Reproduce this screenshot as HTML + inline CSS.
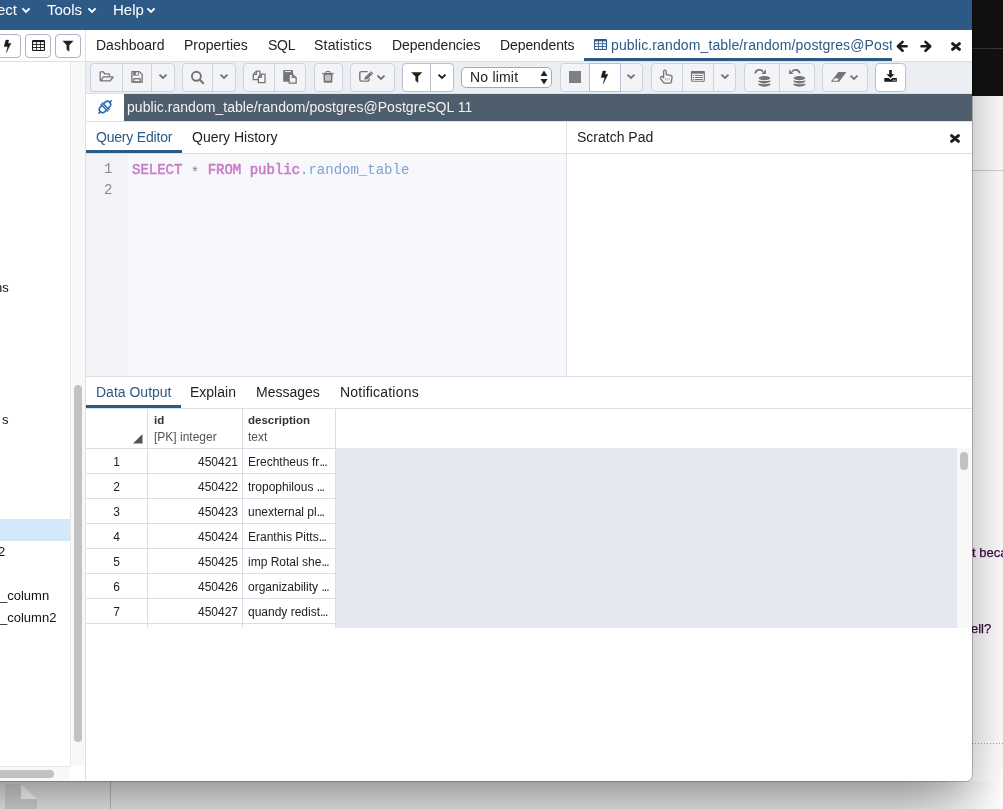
<!DOCTYPE html>
<html><head><meta charset="utf-8">
<style>
*{box-sizing:border-box;margin:0;padding:0}
html,body{width:1003px;height:809px;overflow:hidden;background:#fff;font-family:"Liberation Sans",sans-serif;color:#222}
.a{position:absolute}
.t{position:absolute;white-space:nowrap;line-height:1;will-change:transform}
.mono{font-family:"Liberation Mono",monospace}
</style></head>
<body>
<div class="a" style="left:0px;top:0px;width:1003px;height:809px;background:#fff"></div>
<div class="a" style="left:972px;top:0px;width:31px;height:96px;background:#121212"></div>
<div class="a" style="left:972px;top:48px;width:31px;height:1px;background:#3a3a3a"></div>
<div class="a" style="left:972px;top:170px;width:31px;height:1px;background:#d0d0d0"></div>
<div class="t" style="left:972px;top:546px;font-size:13px;color:#3e0843;-webkit-text-stroke:0.25px #3e0843">t beca</div>
<div class="t" style="left:971px;top:622px;font-size:13px;color:#3e0843;-webkit-text-stroke:0.25px #3e0843">ell?</div>
<div class="a" style="left:972px;top:743px;width:31px;height:1px;background:repeating-linear-gradient(90deg,#a8a8a8 0 1px,transparent 1px 3px)"></div>
<div class="a" style="left:0px;top:781px;width:1003px;height:28px;background:linear-gradient(180deg,#dcdcdc 0,#e2e2e2 10px,#e8e8e8 28px)"></div>
<div class="a" style="left:900px;top:781px;width:103px;height:28px;background:linear-gradient(90deg,rgba(255,255,255,0) 0,rgba(255,255,255,0.6) 60px,rgba(255,255,255,1) 100px)"></div>
<div class="a" style="left:110px;top:781px;width:1px;height:28px;background:rgba(0,0,0,0.2)"></div>
<svg class="a" style="left:5px;top:784px" width="33" height="25" viewBox="0 0 33 25"><path d="M0 0 H16 L32 15 V25 H0 Z" fill="#d0d0d0"/><path d="M16 0 L32 15 H16 Z" fill="#fafafa"/></svg>
<div class="a" style="left:-300px;top:-100px;width:1272px;height:881px;background:#fff;border-bottom-right-radius:6px;box-shadow:0 18px 50px rgba(0,0,0,0.35)"></div>
<div class="a" style="left:0;top:0;width:972px;height:781px;background:#fff;border-bottom-right-radius:6px;overflow:hidden;box-shadow:0 0 0 1px rgba(0,0,0,0.22)">
<div class="a" style="left:0px;top:0px;width:972px;height:30px;background:#2c5985"></div>
<div class="t" style="left:-3px;top:1.5px;font-size:15px;color:#fff">ect</div>
<div class="t" style="left:47px;top:1.5px;font-size:15px;color:#fff">Tools</div>
<div class="t" style="left:112.5px;top:1.5px;font-size:15px;color:#fff">Help</div>
<svg class="a" style="left:21px;top:6px" width="10" height="9" viewBox="0 0 10 9"><path d="M1.4 2.4 L5 5.9 L8.6 2.4" fill="none" stroke="#fff" stroke-width="2"/></svg>
<svg class="a" style="left:86.8px;top:6px" width="10" height="9" viewBox="0 0 10 9"><path d="M1.4 2.4 L5 5.9 L8.6 2.4" fill="none" stroke="#fff" stroke-width="2"/></svg>
<svg class="a" style="left:146px;top:6px" width="10" height="9" viewBox="0 0 10 9"><path d="M1.4 2.4 L5 5.9 L8.6 2.4" fill="none" stroke="#fff" stroke-width="2"/></svg>
<div class="a" style="left:-10px;top:34px;width:31px;height:24px;border:1px solid #aab4c5;border-radius:4px;background:#fff"></div>
<div class="a" style="left:25px;top:34px;width:26px;height:24px;border:1px solid #aab4c5;border-radius:4px;background:#fff"></div>
<div class="a" style="left:55px;top:34px;width:26px;height:24px;border:1px solid #aab4c5;border-radius:4px;background:#fff"></div>
<svg class="a" style="left:-1px;top:37px" width="18" height="18" viewBox="0 0 18 18"><path d="M6.9 3.1 L9.8 3.1 L8.9 6.4 L12.0 6.2 L7.3 15.6 L8.8 9.5 L5.1 9.6 Z" fill="#1a1a1a" stroke="#1a1a1a" stroke-width="0.4" stroke-linejoin="round"/></svg>
<svg class="a" style="left:32px;top:40px" width="13" height="11" viewBox="0 0 13 11"><rect x="0" y="0" width="13" height="11" rx="1.2" fill="#1a1a1a"/><g fill="#fff"><rect x="1.1" y="2.1" width="3.1" height="2"/><rect x="5" y="2.1" width="3.1" height="2"/><rect x="8.9" y="2.1" width="3" height="2"/><rect x="1.1" y="5" width="3.1" height="2"/><rect x="5" y="5" width="3.1" height="2"/><rect x="8.9" y="5" width="3" height="2"/><rect x="1.1" y="7.9" width="3.1" height="2"/><rect x="5" y="7.9" width="3.1" height="2"/><rect x="8.9" y="7.9" width="3" height="2"/></g></svg>
<svg class="a" style="left:62px;top:40px" width="12" height="12" viewBox="0 0 12 12"><path d="M0.5 0.8 H11.5 L7.3 5.2 V11.8 L4.6 9.4 V5.2 Z" fill="#222"/></svg>
<div class="a" style="left:0px;top:61px;width:85px;height:1px;background:#dde0e6"></div>
<div class="a" style="left:70px;top:62px;width:15px;height:704px;background:#f8f8f8;border-left:1px solid #e8e8e8"></div>
<div class="a" style="left:74px;top:385px;width:8px;height:357px;background:#c2c2c2;border-radius:4px"></div>
<div class="a" style="left:0px;top:766px;width:70px;height:15px;background:#f8f8f8;border-top:1px solid #e8e8e8"></div>
<div class="a" style="left:-10px;top:770px;width:64px;height:8px;background:#c2c2c2;border-radius:4px"></div>
<div class="a" style="left:70px;top:766px;width:15px;height:15px;background:#fff"></div>
<div class="a" style="left:0px;top:519px;width:70px;height:22px;background:#d3e9fb"></div>
<div class="t" style="left:-4.8px;top:281px;font-size:13px;color:#111">ns</div>
<div class="t" style="left:2.1px;top:413px;font-size:13px;color:#111">s</div>
<div class="t" style="left:-2px;top:545px;font-size:13px;color:#111">2</div>
<div class="t" style="left:0px;top:589px;font-size:13px;color:#111">_column</div>
<div class="t" style="left:0px;top:611px;font-size:13px;color:#111">_column2</div>
<div class="a" style="left:85px;top:30px;width:1px;height:751px;background:#dde0e6"></div>
<div class="t" style="left:96px;top:38px;font-size:14px;color:#222;letter-spacing:0px">Dashboard</div>
<div class="t" style="left:184px;top:38px;font-size:14px;color:#222;letter-spacing:0px">Properties</div>
<div class="t" style="left:268px;top:38px;font-size:14px;color:#222;letter-spacing:-0.3px">SQL</div>
<div class="t" style="left:314px;top:38px;font-size:14px;color:#222;letter-spacing:0.2px">Statistics</div>
<div class="t" style="left:392px;top:38px;font-size:14px;color:#222;letter-spacing:-0.1px">Dependencies</div>
<div class="t" style="left:500px;top:38px;font-size:14px;color:#222;letter-spacing:-0.1px">Dependents</div>
<div class="t" style="left:611px;top:38px;font-size:14px;color:#2c5985;width:281px;height:17px;line-height:14px;overflow:hidden;letter-spacing:0.12px">public.random_table/random/postgres@PostgreSQL 11</div>
<svg class="a" style="left:594px;top:39px" width="13" height="11" viewBox="0 0 13 11"><rect x="0" y="0" width="13" height="11" rx="1.2" fill="#2c5985"/><g fill="#fff"><rect x="1.1" y="2.3" width="3.1" height="2"/><rect x="5" y="2.3" width="3.1" height="2"/><rect x="8.9" y="2.3" width="3" height="2"/><rect x="1.1" y="5.2" width="3.1" height="1.9"/><rect x="5" y="5.2" width="3.1" height="1.9"/><rect x="8.9" y="5.2" width="3" height="1.9"/><rect x="1.1" y="8" width="3.1" height="1.9"/><rect x="5" y="8" width="3.1" height="1.9"/><rect x="8.9" y="8" width="3" height="1.9"/></g></svg>
<div class="a" style="left:584px;top:58px;width:308px;height:3px;background:#2c5985"></div>
<div class="a" style="left:86px;top:61px;width:886px;height:1px;background:#dde0e6"></div>
<svg class="a" style="left:893px;top:36px" width="42" height="20" viewBox="0 0 42 20"><g fill="none" stroke="#1c1c1c" stroke-width="2.6" stroke-linecap="round" stroke-linejoin="round"><path d="M13.6 10.3 H5.5 M9.6 5.9 L4.9 10.3 L9.6 14.8"/><path d="M28.5 10.3 H36.5 M32.5 5.9 L37.2 10.3 L32.5 14.8"/></g></svg>
<svg class="a" style="left:951px;top:42px" width="10" height="9" viewBox="0 0 10 9"><path d="M1.6 1.6 L8.4 7.4 M8.4 1.6 L1.6 7.4" stroke="#1c1c1c" stroke-width="3" stroke-linecap="round"/></svg>
<div class="a" style="left:86px;top:62px;width:886px;height:32px;background:#ebeef3;border-bottom:1px solid #dde0e6"></div>
<div class="a" style="left:90px;top:63px;width:85px;height:29px;background:#f3f4f8;border:1px solid #cdd2dc;border-radius:4px"></div>
<div class="a" style="left:122px;top:63px;width:1px;height:29px;background:#cdd2dc"></div>
<div class="a" style="left:151px;top:63px;width:1px;height:29px;background:#cdd2dc"></div>
<div class="a" style="left:182px;top:63px;width:54px;height:29px;background:#f3f4f8;border:1px solid #cdd2dc;border-radius:4px"></div>
<div class="a" style="left:212px;top:63px;width:1px;height:29px;background:#cdd2dc"></div>
<div class="a" style="left:243px;top:63px;width:63px;height:29px;background:#f3f4f8;border:1px solid #cdd2dc;border-radius:4px"></div>
<div class="a" style="left:274px;top:63px;width:1px;height:29px;background:#cdd2dc"></div>
<div class="a" style="left:314px;top:63px;width:29px;height:29px;background:#f3f4f8;border:1px solid #cdd2dc;border-radius:4px"></div>
<div class="a" style="left:350px;top:63px;width:45px;height:29px;background:#f3f4f8;border:1px solid #cdd2dc;border-radius:4px"></div>
<div class="a" style="left:402px;top:63px;width:52px;height:29px;background:#fff;border:1px solid #b9c1cf;border-radius:4px"></div>
<div class="a" style="left:430px;top:63px;width:1px;height:29px;background:#b9c1cf"></div>
<div class="a" style="left:461px;top:67px;width:91px;height:21px;background:#fff;border:1px solid #a9a9a9;border-radius:5px"></div>
<div class="t" style="left:470px;top:70px;font-size:14px;color:#222;letter-spacing:0.2px">No limit</div>
<svg class="a" style="left:540px;top:70px" width="8" height="15" viewBox="0 0 8 15"><path d="M4 0.5 L7.5 6 H0.5 Z M4 14.5 L7.5 9 H0.5 Z" fill="#222"/></svg>
<div class="a" style="left:560px;top:63px;width:83px;height:29px;background:#f3f4f8;border:1px solid #cdd2dc;border-radius:4px"></div>
<div class="a" style="left:589px;top:63px;width:1px;height:29px;background:#cdd2dc"></div>
<div class="a" style="left:620px;top:63px;width:1px;height:29px;background:#cdd2dc"></div>
<div class="a" style="left:589px;top:63px;width:32px;height:29px;background:#fff;border:1px solid #b9c1cf"></div>
<div class="a" style="left:651px;top:63px;width:85px;height:29px;background:#f3f4f8;border:1px solid #cdd2dc;border-radius:4px"></div>
<div class="a" style="left:682px;top:63px;width:1px;height:29px;background:#cdd2dc"></div>
<div class="a" style="left:713px;top:63px;width:1px;height:29px;background:#cdd2dc"></div>
<div class="a" style="left:744px;top:63px;width:71px;height:29px;background:#f3f4f8;border:1px solid #cdd2dc;border-radius:4px"></div>
<div class="a" style="left:779px;top:63px;width:1px;height:29px;background:#cdd2dc"></div>
<div class="a" style="left:822px;top:63px;width:46px;height:29px;background:#f3f4f8;border:1px solid #cdd2dc;border-radius:4px"></div>
<div class="a" style="left:875px;top:63px;width:31px;height:29px;background:#fff;border:1px solid #b9c1cf;border-radius:4px"></div>
<svg class="a" style="left:96px;top:66px" width="22" height="22" viewBox="0 0 22 22"><g fill="none" stroke="#747474" stroke-width="1.3" stroke-linejoin="round"><path d="M4.15 14.8 V6.6 Q4.15 5.85 4.9 5.85 H7.6 L8.6 7.95 H12.7 Q13.45 7.95 13.45 8.7 V10.6"/><path d="M4.6 14.85 L7.4 10.95 H16.6 Q17.3 10.95 16.9 11.5 L14 14.85 Z"/></g></svg>
<svg class="a" style="left:126px;top:66px" width="22" height="22" viewBox="0 0 22 22"><path d="M5.85 5.65 H13.35 L16.15 8.45 V16.05 H5.85 Z" fill="none" stroke="#747474" stroke-width="1.3" stroke-linejoin="round"/><rect x="7.2" y="5" width="5.6" height="4.6" fill="#747474"/><rect x="9.8" y="6.3" width="2.2" height="2.4" fill="#f3f4f8"/><rect x="7.85" y="12.75" width="6.3" height="3.3" fill="none" stroke="#747474" stroke-width="1.3"/></svg>
<svg class="a" style="left:156.9px;top:72.9px" width="12" height="9" viewBox="0 0 12 9"><path d="M2.5 1.67 L6 4.87 L9.5 1.67" fill="none" stroke="#747474" stroke-width="1.9" stroke-linejoin="miter"/></svg>
<svg class="a" style="left:189px;top:69px" width="16" height="16" viewBox="0 0 16 16"><circle cx="7.4" cy="7.3" r="4.5" fill="none" stroke="#747474" stroke-width="1.9"/><path d="M10.6 10.6 L14.2 14.2" stroke="#747474" stroke-width="2.1" stroke-linecap="round"/></svg>
<svg class="a" style="left:217.8px;top:72.8px" width="12" height="9" viewBox="0 0 12 9"><path d="M2.5 1.67 L6 4.87 L9.5 1.67" fill="none" stroke="#747474" stroke-width="1.9" stroke-linejoin="miter"/></svg>
<svg class="a" style="left:249px;top:67px" width="20" height="20" viewBox="0 0 20 20"><g stroke="#747474" stroke-width="1.3" stroke-linejoin="round"><path d="M4.3 7.4 L7.4 4.1 H10.9 V12.7 H4.3 Z" fill="none"/><path d="M4.3 7.4 H7.4 V4.1" fill="none"/><path d="M9.3 10.3 L12.4 7.2 H16 V15.7 H9.3 Z" fill="#f3f4f8"/><path d="M9.3 10.3 H12.4 V7.2" fill="none"/></g></svg>
<svg class="a" style="left:280px;top:67px" width="20" height="20" viewBox="0 0 20 20"><rect x="3.2" y="3" width="9.8" height="11.7" rx="0.8" fill="#747474"/><rect x="4.9" y="4.1" width="6.1" height="1" fill="#f3f4f8"/><g stroke="#747474" stroke-width="1.3" stroke-linejoin="round"><path d="M9.15 7.25 H12.4 L16.15 11 V16.15 H9.15 Z" fill="#f3f4f8"/><path d="M12.4 7.25 V10.4 H16.15" fill="none"/></g></svg>
<svg class="a" style="left:318px;top:67px" width="20" height="20" viewBox="0 0 20 20"><rect x="4.1" y="5.9" width="11.6" height="1.2" fill="#747474"/><path d="M7.7 6 L8.3 4.5 H11.7 L12.3 6" fill="none" stroke="#747474" stroke-width="1.1"/><path d="M5.4 7 H14.6 L14.3 15.1 Q14.2 15.7 13.6 15.7 H6.4 Q5.8 15.7 5.7 15.1 Z" fill="#747474"/><rect x="7" y="7.9" width="6" height="5.9" fill="#c0c1c5"/></svg>
<svg class="a" style="left:355px;top:66px" width="22" height="22" viewBox="0 0 22 22"><path d="M12.6 5.6 H6.3 Q4.8 5.6 4.8 7.1 V13.6 Q4.8 15.1 6.3 15.1 H12.7 Q14.2 15.1 14.2 13.6 V12.2" fill="none" stroke="#747474" stroke-width="1.4"/><path d="M9.2 13.8 L10.0 10.9 L16.0 5.2 L18.3 7.6 L12.3 13.2 Z" fill="#747474"/><path d="M15.0 6.4 L17.1 8.5" stroke="#f3f4f8" stroke-width="0.7"/><path d="M11.2 11.6 L15.6 7.4" stroke="#a0a0a0" stroke-width="0.6"/></svg>
<svg class="a" style="left:374.85px;top:73.8px" width="12" height="9" viewBox="0 0 12 9"><path d="M2.5 1.67 L6 4.87 L9.5 1.67" fill="none" stroke="#747474" stroke-width="1.9" stroke-linejoin="miter"/></svg>
<svg class="a" style="left:411px;top:72px" width="12" height="12" viewBox="0 0 12 12"><path d="M0.2 0.3 H11.3 L7.2 4.6 V11 L4.4 8.6 V4.6 Z" fill="#222"/></svg>
<svg class="a" style="left:435.95px;top:72.8px" width="12" height="9" viewBox="0 0 12 9"><path d="M2.5 1.67 L6 4.87 L9.5 1.67" fill="none" stroke="#1c1c1c" stroke-width="1.9" stroke-linejoin="miter"/></svg>
<div class="a" style="left:569px;top:71px;width:12px;height:12px;background:#808080"></div>
<svg class="a" style="left:596px;top:68px" width="18" height="18" viewBox="0 0 18 18"><path d="M6.9 3.1 L9.8 3.1 L8.9 6.4 L12.0 6.2 L7.3 15.6 L8.8 9.5 L5.1 9.6 Z" fill="#1a1a1a" stroke="#1a1a1a" stroke-width="0.4" stroke-linejoin="round"/></svg>
<svg class="a" style="left:625.45px;top:73px" width="12" height="9" viewBox="0 0 12 9"><path d="M2.5 1.67 L6 4.87 L9.5 1.67" fill="none" stroke="#747474" stroke-width="1.9" stroke-linejoin="miter"/></svg>
<svg class="a" style="left:656px;top:67px" width="22" height="20" viewBox="0 0 22 20"><path d="M7.6 10.6 V4.6 Q7.6 3.2 8.9 3.2 Q10.2 3.2 10.2 4.6 V7.6 L14.6 8.3 Q16.2 8.6 16.1 10.2 L15.3 15.2 Q15.1 16.1 14.2 16.1 H8.6 Q8 16.1 7.6 15.6 L4.6 11.7 Q4 10.6 4.9 9.8 Q6.1 9 7.6 10.6 Z" fill="none" stroke="#747474" stroke-width="1.3" stroke-linejoin="round"/><path d="M9.4 11.2 V13.3 M11.4 11.2 V13.3 M13.3 11.2 V13.3" stroke="#b0b0b0" stroke-width="0.9"/></svg>
<svg class="a" style="left:687px;top:67px" width="22" height="20" viewBox="0 0 22 20"><rect x="4.5" y="4.5" width="12.8" height="9.8" rx="1" fill="#fff" stroke="#747474" stroke-width="1.1"/><rect x="4" y="4" width="13.8" height="2.8" rx="1" fill="#747474"/><g fill="#747474"><circle cx="6.4" cy="8.4" r="0.7"/><circle cx="6.4" cy="10.5" r="0.7"/><circle cx="6.4" cy="12.5" r="0.7"/></g><path d="M8.1 8.4 H15.6 M8.1 10.5 H15.6 M8.1 12.5 H15.6" stroke="#747474" stroke-width="1" stroke-linecap="round"/></svg>
<svg class="a" style="left:718.6px;top:72.6px" width="12" height="9" viewBox="0 0 12 9"><path d="M2.5 1.67 L6 4.87 L9.5 1.67" fill="none" stroke="#747474" stroke-width="1.9" stroke-linejoin="miter"/></svg>
<svg class="a" style="left:757.5px;top:76px" width="13" height="12" viewBox="0 0 13 12"><g fill="#747474"><ellipse cx="6.4" cy="2.1" rx="5.9" ry="2.05"/><path d="M0.5 4.4 Q6.4 5.6 12.3 4.4 V5.8 Q6.4 9.4 0.5 5.8 Z"/><path d="M0.5 7.6 Q6.4 8.8 12.3 7.6 V9.0 Q6.4 12.6 0.5 9.0 Z"/></g></svg>
<svg class="a" style="left:750px;top:66px" width="20" height="10" viewBox="0 0 20 10"><path d="M5.2 7.4 A4.4 4.4 0 0 1 13.0 5.6" fill="none" stroke="#747474" stroke-width="1.8"/><path d="M15.9 3.5 V7.9 H11.4 Z" fill="#747474"/></svg>
<svg class="a" style="left:793.2px;top:76px" width="13" height="12" viewBox="0 0 13 12"><g fill="#747474"><ellipse cx="6.4" cy="2.1" rx="5.9" ry="2.05"/><path d="M0.5 4.4 Q6.4 5.6 12.3 4.4 V5.8 Q6.4 9.4 0.5 5.8 Z"/><path d="M0.5 7.6 Q6.4 8.8 12.3 7.6 V9.0 Q6.4 12.6 0.5 9.0 Z"/></g></svg>
<svg class="a" style="left:785px;top:66px" width="20" height="10" viewBox="0 0 20 10"><path d="M14.8 7.4 A4.4 4.4 0 0 0 7.0 5.6" fill="none" stroke="#747474" stroke-width="1.8"/><path d="M4.1 3.5 V7.9 H8.6 Z" fill="#747474"/></svg>
<svg class="a" style="left:827px;top:66px" width="22" height="22" viewBox="0 0 22 22"><path d="M4.4 15.8 Q3.8 15.8 4.2 15.2 L11.3 6.1 H18.6 Q19.3 6.1 18.9 6.7 L12.1 15.8 Z" fill="#747474"/><path d="M5.9 14.7 L7.6 12.4 H11.8 L10.4 14.7 Z" fill="#fff"/></svg>
<svg class="a" style="left:848.1px;top:73.8px" width="12" height="9" viewBox="0 0 12 9"><path d="M2.5 1.67 L6 4.87 L9.5 1.67" fill="none" stroke="#747474" stroke-width="1.9" stroke-linejoin="miter"/></svg>
<svg class="a" style="left:880px;top:66px" width="22" height="22" viewBox="0 0 22 22"><path d="M9.2 4.1 H11.8 V8.2 H14.6 L10.5 11.9 L6.4 8.2 H9.2 Z" fill="#1a1a1a"/><path d="M4.3 12.1 H8.8 L10.5 13.8 L12.2 12.1 H16.8 V15.8 H4.3 Z" fill="#1a1a1a"/><circle cx="13.3" cy="14.2" r="0.6" fill="#fff"/><circle cx="15.2" cy="14.2" r="0.6" fill="#fff"/></svg>
<div class="a" style="left:124px;top:94px;width:848px;height:27px;background:#4f5e6d"></div>
<div class="t" style="left:127px;top:100px;font-size:14px;color:#f2f2f2;letter-spacing:0.04px">public.random_table/random/postgres@PostgreSQL 11</div>
<div class="a" style="left:86px;top:121px;width:886px;height:1px;background:#dde0e6"></div>
<svg class="a" style="left:96px;top:99px" width="18" height="16" viewBox="0 0 18 16"><g transform="rotate(45 9 8)" fill="none" stroke="#2a6db0" stroke-width="1.6" stroke-linecap="round"><path d="M5.8 7 V4.6 A3.2 3.2 0 0 1 12.2 4.6 V7"/><path d="M5.8 9 V11.4 A3.2 3.2 0 0 0 12.2 11.4 V9"/><path d="M4.4 7 H13.6 M4.4 9 H13.6 M9 1.4 V-0.8 M9 14.6 V16.8"/></g></svg>
<div class="t" style="left:96px;top:130px;font-size:14px;color:#2c5985;letter-spacing:-0.2px">Query Editor</div>
<div class="t" style="left:192px;top:130px;font-size:14px;color:#222">Query History</div>
<div class="a" style="left:86px;top:150px;width:96px;height:3px;background:#2c5985"></div>
<div class="a" style="left:86px;top:153px;width:480px;height:1px;background:#dde0e6"></div>
<div class="a" style="left:86px;top:154px;width:42px;height:222px;background:#f2f3f7"></div>
<div class="a" style="left:128px;top:154px;width:438px;height:222px;background:#f7f8fc"></div>
<div class="a" style="left:566px;top:122px;width:1px;height:254px;background:#dde0e6"></div>
<div class="t" style="left:104px;top:162px;font-size:14px;color:#888;font-family:Liberation Mono">1</div>
<div class="t" style="left:104px;top:183px;font-size:14px;color:#888;font-family:Liberation Mono">2</div>
<div class="t mono" style="left:132px;top:162.5px;font-size:14px;color:#c97cc7"><span style="-webkit-text-stroke:0.55px #c97cc7">SELECT</span> <span style="color:#808080;position:relative;top:3px">*</span> <span style="-webkit-text-stroke:0.55px #c97cc7">FROM public</span><span style="color:#7fa2cf">.random_table</span></div>
<div class="t" style="left:577px;top:130px;font-size:14px;color:#222">Scratch Pad</div>
<svg class="a" style="left:950px;top:134px" width="10" height="9" viewBox="0 0 10 9"><path d="M1.6 1.6 L8.4 7.4 M8.4 1.6 L1.6 7.4" stroke="#1c1c1c" stroke-width="3" stroke-linecap="round"/></svg>
<div class="a" style="left:567px;top:153px;width:405px;height:1px;background:#dde0e6"></div>
<div class="a" style="left:86px;top:376px;width:886px;height:1px;background:#dde0e6"></div>
<div class="t" style="left:96px;top:385px;font-size:14px;color:#2c5985">Data Output</div>
<div class="t" style="left:190px;top:385px;font-size:14px;color:#222">Explain</div>
<div class="t" style="left:256px;top:385px;font-size:14px;color:#222">Messages</div>
<div class="t" style="left:340px;top:385px;font-size:14px;color:#222;letter-spacing:0.2px">Notifications</div>
<div class="a" style="left:86px;top:405px;width:95px;height:3px;background:#2c5985"></div>
<div class="a" style="left:86px;top:408px;width:886px;height:1px;background:#dde0e6"></div>
<div class="a" style="left:336px;top:448px;width:621px;height:180px;background:#e5e8f1"></div>
<div class="a" style="left:957px;top:448px;width:14px;height:180px;background:#f8f8f8"></div>
<div class="a" style="left:960px;top:452px;width:8px;height:18px;background:#c2c2c2;border-radius:4px"></div>
<div class="a" style="left:86px;top:448px;width:250px;height:1px;background:#dadde5"></div>
<div class="a" style="left:147px;top:409px;width:1px;height:219px;background:#dadde5"></div>
<div class="a" style="left:242px;top:409px;width:1px;height:219px;background:#dadde5"></div>
<div class="a" style="left:335px;top:409px;width:1px;height:219px;background:#dadde5"></div>
<svg class="a" style="left:133px;top:434px" width="10" height="10" viewBox="0 0 10 10"><path d="M9.5 0 V9.5 H0 Z" fill="#555"/></svg>
<div class="t" style="left:154px;top:415px;font-size:11.5px;font-weight:bold;color:#333">id</div>
<div class="t" style="left:154px;top:431px;font-size:12px;color:#555">[PK] integer</div>
<div class="t" style="left:248px;top:415px;font-size:11.5px;font-weight:bold;color:#333">description</div>
<div class="t" style="left:248px;top:431px;font-size:12px;color:#555">text</div>
<div class="a" style="left:86px;top:473px;width:250px;height:1px;background:#dadde5"></div>
<div class="t" style="left:86px;top:455.5px;font-size:12px;color:#222;width:61px;text-align:center">1</div>
<div class="t" style="left:148px;top:455.5px;font-size:12px;color:#222;width:90px;text-align:right">450421</div>
<div class="t" style="left:248px;top:455.5px;font-size:12px;color:#222">Erechtheus fr<span style="letter-spacing:-0.9px">...</span></div>
<div class="a" style="left:86px;top:498px;width:250px;height:1px;background:#dadde5"></div>
<div class="t" style="left:86px;top:480.5px;font-size:12px;color:#222;width:61px;text-align:center">2</div>
<div class="t" style="left:148px;top:480.5px;font-size:12px;color:#222;width:90px;text-align:right">450422</div>
<div class="t" style="left:248px;top:480.5px;font-size:12px;color:#222">tropophilous <span style="letter-spacing:-0.9px">...</span></div>
<div class="a" style="left:86px;top:523px;width:250px;height:1px;background:#dadde5"></div>
<div class="t" style="left:86px;top:505.5px;font-size:12px;color:#222;width:61px;text-align:center">3</div>
<div class="t" style="left:148px;top:505.5px;font-size:12px;color:#222;width:90px;text-align:right">450423</div>
<div class="t" style="left:248px;top:505.5px;font-size:12px;color:#222">unexternal pl<span style="letter-spacing:-0.9px">...</span></div>
<div class="a" style="left:86px;top:548px;width:250px;height:1px;background:#dadde5"></div>
<div class="t" style="left:86px;top:530.5px;font-size:12px;color:#222;width:61px;text-align:center">4</div>
<div class="t" style="left:148px;top:530.5px;font-size:12px;color:#222;width:90px;text-align:right">450424</div>
<div class="t" style="left:248px;top:530.5px;font-size:12px;color:#222">Eranthis Pitts<span style="letter-spacing:-0.9px">...</span></div>
<div class="a" style="left:86px;top:573px;width:250px;height:1px;background:#dadde5"></div>
<div class="t" style="left:86px;top:555.5px;font-size:12px;color:#222;width:61px;text-align:center">5</div>
<div class="t" style="left:148px;top:555.5px;font-size:12px;color:#222;width:90px;text-align:right">450425</div>
<div class="t" style="left:248px;top:555.5px;font-size:12px;color:#222">imp Rotal she<span style="letter-spacing:-0.9px">...</span></div>
<div class="a" style="left:86px;top:598px;width:250px;height:1px;background:#dadde5"></div>
<div class="t" style="left:86px;top:580.5px;font-size:12px;color:#222;width:61px;text-align:center">6</div>
<div class="t" style="left:148px;top:580.5px;font-size:12px;color:#222;width:90px;text-align:right">450426</div>
<div class="t" style="left:248px;top:580.5px;font-size:12px;color:#222">organizability <span style="letter-spacing:-0.9px">...</span></div>
<div class="a" style="left:86px;top:623px;width:250px;height:1px;background:#dadde5"></div>
<div class="t" style="left:86px;top:605.5px;font-size:12px;color:#222;width:61px;text-align:center">7</div>
<div class="t" style="left:148px;top:605.5px;font-size:12px;color:#222;width:90px;text-align:right">450427</div>
<div class="t" style="left:248px;top:605.5px;font-size:12px;color:#222">quandy redist<span style="letter-spacing:-0.9px">...</span></div>
</div>
</body></html>
